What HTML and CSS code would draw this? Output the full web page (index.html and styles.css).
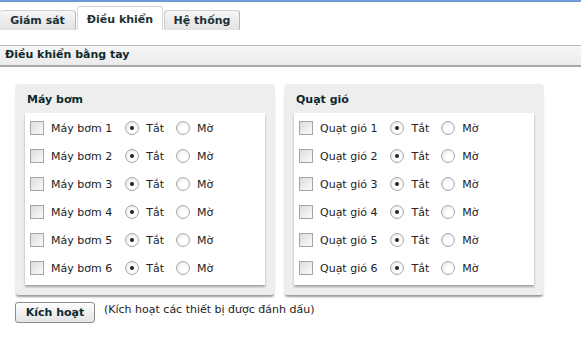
FILE: index.html
```html
<!DOCTYPE html>
<html lang="vi">
<head>
    <meta charset="UTF-8">
    <title>Điều khiển</title>
    <link rel="stylesheet" href="styles.css">
</head>
<body>

<div class="topbar"></div>

<ul class="tabs">
    <li class="tab">Giám sát</li>
    <li class="tab active">Điều khiển</li>
    <li class="tab">Hệ thống</li>
</ul>

<div class="section-title">Điều khiển bằng tay</div>

<div class="panels">
    <!-- Máy bơm -->
    <div class="panel">
        <h3>Máy bơm</h3>
        <div class="panel-body">
            <div class="row"><input type="checkbox" class="chk"><span class="name">Máy bơm 1</span><input type="radio" name="b1" class="rad" checked><span class="opt">Tắt</span><input type="radio" name="b1" class="rad"><span class="opt">Mờ</span></div>
            <div class="row"><input type="checkbox" class="chk"><span class="name">Máy bơm 2</span><input type="radio" name="b2" class="rad" checked><span class="opt">Tắt</span><input type="radio" name="b2" class="rad"><span class="opt">Mờ</span></div>
            <div class="row"><input type="checkbox" class="chk"><span class="name">Máy bơm 3</span><input type="radio" name="b3" class="rad" checked><span class="opt">Tắt</span><input type="radio" name="b3" class="rad"><span class="opt">Mờ</span></div>
            <div class="row"><input type="checkbox" class="chk"><span class="name">Máy bơm 4</span><input type="radio" name="b4" class="rad" checked><span class="opt">Tắt</span><input type="radio" name="b4" class="rad"><span class="opt">Mờ</span></div>
            <div class="row"><input type="checkbox" class="chk"><span class="name">Máy bơm 5</span><input type="radio" name="b5" class="rad" checked><span class="opt">Tắt</span><input type="radio" name="b5" class="rad"><span class="opt">Mờ</span></div>
            <div class="row"><input type="checkbox" class="chk"><span class="name">Máy bơm 6</span><input type="radio" name="b6" class="rad" checked><span class="opt">Tắt</span><input type="radio" name="b6" class="rad"><span class="opt">Mờ</span></div>
        </div>
    </div>

    <!-- Quạt gió -->
    <div class="panel">
        <h3>Quạt gió</h3>
        <div class="panel-body">
            <div class="row"><input type="checkbox" class="chk"><span class="name">Quạt gió 1</span><input type="radio" name="q1" class="rad" checked><span class="opt">Tắt</span><input type="radio" name="q1" class="rad"><span class="opt">Mờ</span></div>
            <div class="row"><input type="checkbox" class="chk"><span class="name">Quạt gió 2</span><input type="radio" name="q2" class="rad" checked><span class="opt">Tắt</span><input type="radio" name="q2" class="rad"><span class="opt">Mờ</span></div>
            <div class="row"><input type="checkbox" class="chk"><span class="name">Quạt gió 3</span><input type="radio" name="q3" class="rad" checked><span class="opt">Tắt</span><input type="radio" name="q3" class="rad"><span class="opt">Mờ</span></div>
            <div class="row"><input type="checkbox" class="chk"><span class="name">Quạt gió 4</span><input type="radio" name="q4" class="rad" checked><span class="opt">Tắt</span><input type="radio" name="q4" class="rad"><span class="opt">Mờ</span></div>
            <div class="row"><input type="checkbox" class="chk"><span class="name">Quạt gió 5</span><input type="radio" name="q5" class="rad" checked><span class="opt">Tắt</span><input type="radio" name="q5" class="rad"><span class="opt">Mờ</span></div>
            <div class="row"><input type="checkbox" class="chk"><span class="name">Quạt gió 6</span><input type="radio" name="q6" class="rad" checked><span class="opt">Tắt</span><input type="radio" name="q6" class="rad"><span class="opt">Mờ</span></div>
        </div>
    </div>
</div>

<div class="actions">
    <button class="btn-kichhoat">Kích hoạt</button>
    <span class="note">(Kích hoạt các thiết bị được đánh dấu)</span>
</div>

</body>
</html>
```

FILE: styles.css
```css
body {
    font-family: "DejaVu Sans", Verdana, sans-serif;
    font-size: 11px;
    color: #222;
    margin: 0;
    padding: 0;
    background-color: #fff;
}

.topbar {
    height: 2px;
    background-color: #6f9bd0;
}

/* Tabs */
.tabs {
    display: flex;
    align-items: flex-end;
    list-style: none;
    margin: 0;
    padding: 4px 0 0 0;
    height: 24px;
    gap: 1px;
}

.tab {
    width: 76px;
    height: 20px;
    line-height: 20px;
    text-align: center;
    font-weight: bold;
    color: #1c3236;
    background: linear-gradient(#f6f6f6, #e2e2e2);
    border: 1px solid #d0d0d0;
    border-bottom: none;
    border-right-color: #b8b8b8;
    border-radius: 3px 3px 0 0;
    box-sizing: border-box;
}

.tab:first-child {
    border-left: none;
}

.tab.active {
    width: 86px;
    height: 24px;
    line-height: 26px;
    background: #fff;
    border-color: #d8d8d8;
}

/* Tiêu đề mục */
.section-title {
    margin-top: 15px;
    height: 19px;
    line-height: 18px;
    padding-left: 5px;
    font-weight: bold;
    color: #0e2a2e;
    background: linear-gradient(#f6f6f6, #ebebeb);
    border-top: 1px solid #bbb;
    border-bottom: 2px solid #a8a8a8;
}

/* Panels */
.panels {
    display: flex;
    gap: 9px;
    padding: 17px 15px 0 15px;
}

.panel {
    width: 260px;
    background-color: #eeeeee;
    border-radius: 4px;
    padding: 1px 10px 10px 10px;
    box-sizing: border-box;
    box-shadow: 0 3px 2px -1px #9a9a9a;
}

.panel h3 {
    margin: 0;
    padding: 8px 0 0 2px;
    height: 20px;
    font-size: 11px;
    color: #0e2a2e;
}

.panel-body {
    background-color: #fff;
    padding: 1px 0 3px 5px;
    box-shadow: 0 2px 2px #a5a5a5;
}

.row {
    display: flex;
    align-items: center;
    height: 28px;
}

.chk {
    appearance: none;
    width: 14px;
    height: 14px;
    margin: 0 7px 0 0;
    border: 1px solid #a4a4a4;
    background: linear-gradient(135deg, #dcdcdc, #fafafa);
    box-sizing: border-box;
}

.name {
    margin-right: 13px;
}

.rad {
    appearance: none;
    width: 14px;
    height: 14px;
    margin: 0 7px 0 0;
    border: 1px solid #a8a8a8;
    border-radius: 50%;
    background: radial-gradient(circle at 60% 60%, #fff 30%, #e0e0e0 100%);
    box-sizing: border-box;
    position: relative;
}

.rad:checked::after {
    content: "";
    position: absolute;
    left: 4px;
    top: 4px;
    width: 4px;
    height: 4px;
    border-radius: 50%;
    background-color: #222;
}

.opt {
    margin-right: 12px;
}

/* Botón */
.actions {
    display: flex;
    align-items: center;
    gap: 9px;
    padding: 7px 15px;
}

.btn-kichhoat {
    width: 80px;
    height: 21px;
    font-family: inherit;
    font-size: 11px;
    font-weight: bold;
    color: #0e2a2e;
    background: linear-gradient(#fdfdfd, #e4e4e4);
    border: 1px solid #8c8c8c;
    border-radius: 3px;
    padding: 0;
}

.note {
    margin-top: -6px;
}
```
